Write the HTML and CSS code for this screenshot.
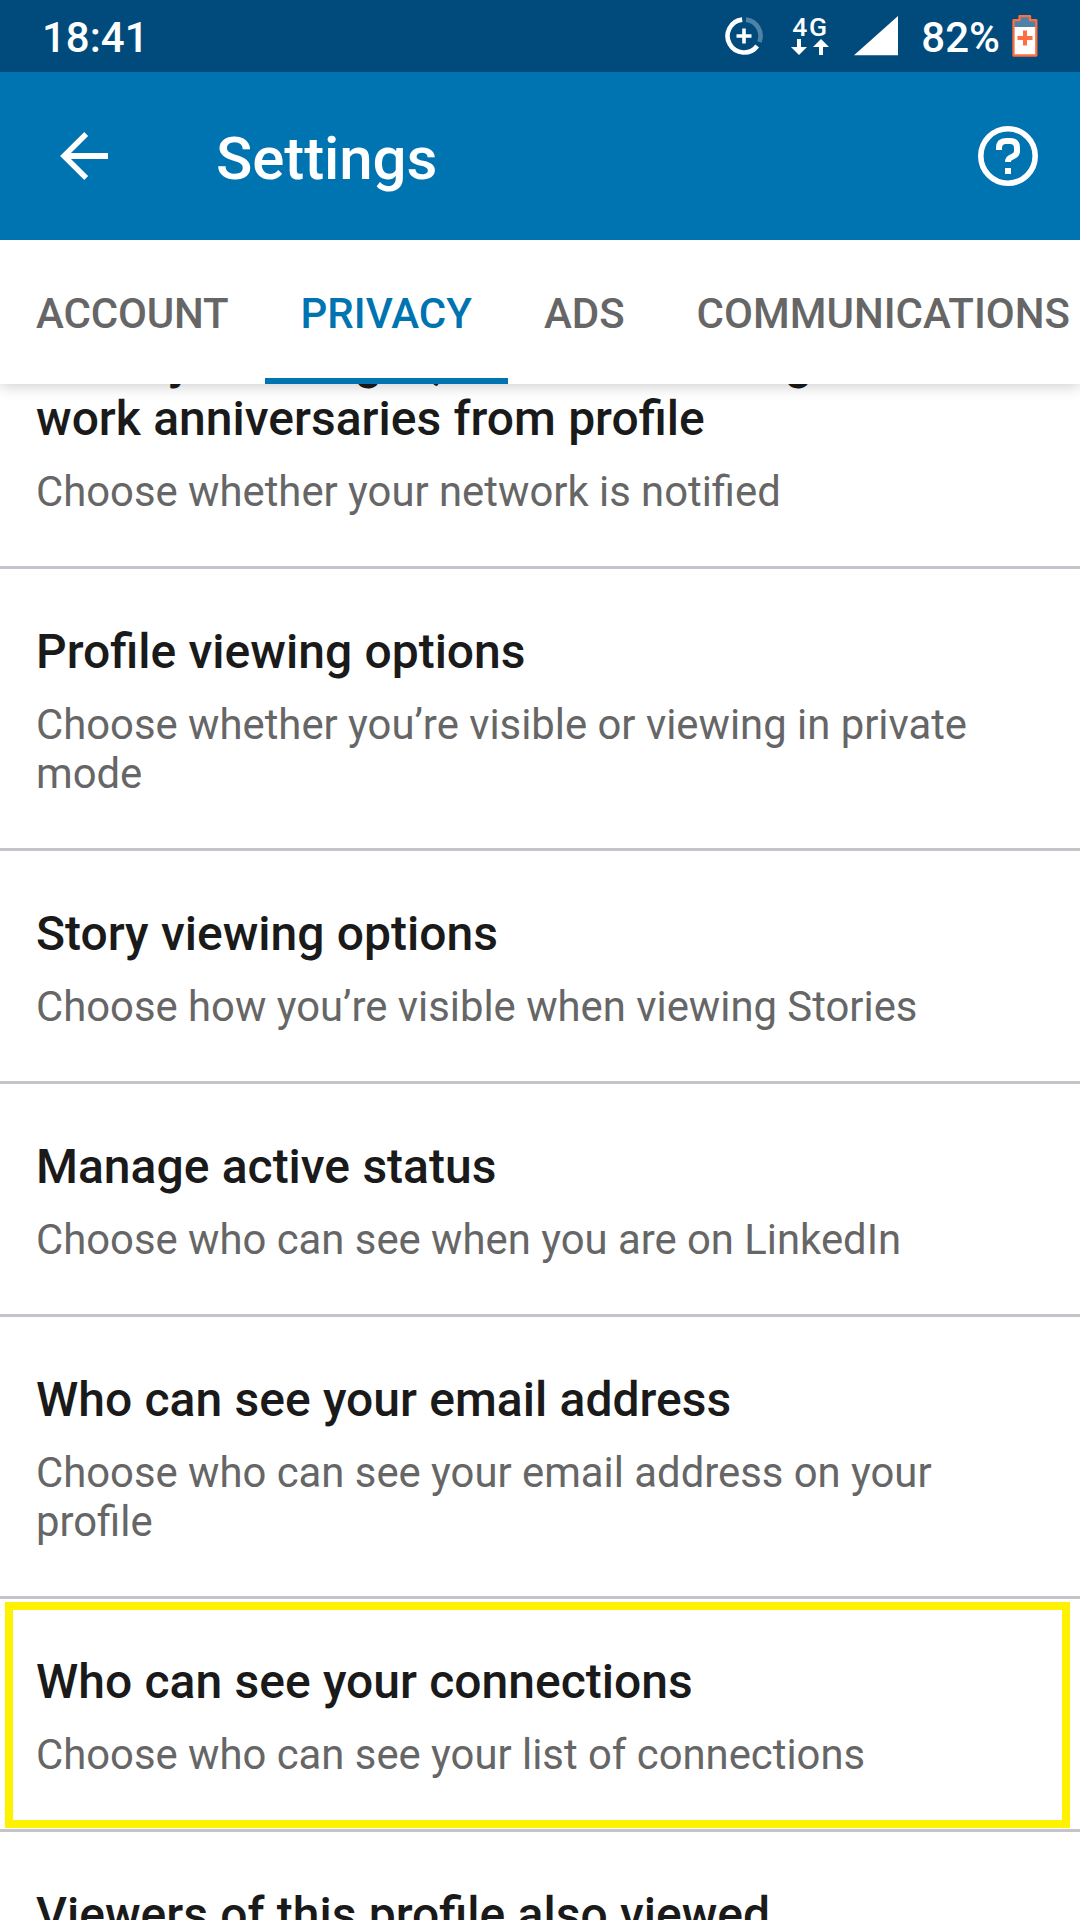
FILE: index.html
```html
<!DOCTYPE html>
<html lang="en">
<head>
<meta charset="utf-8">
<title>Settings</title>
<link rel="stylesheet" href="styles.css">
</head>
<body>
<div class="screen">
  <div class="status-bar">
    <span class="clock">18:41</span>
    <div class="status-icons">
      <svg class="data-saver" width="40" height="40" viewBox="0 0 40 40" fill="none">
        <path d="M18.200 3.600A16.500 16.500 0 1 0 33.200 30" stroke="#fff" stroke-width="4.600"/>
        <path d="M22 3.600A16.500 16.500 0 0 1 35.400 26" stroke="#4f83a6" stroke-width="4.600"/>
        <path d="M20 12.500v15M12.500 20h15" stroke="#fff" stroke-width="3.600"/>
      </svg>
      <div class="network">
        <span class="network-type">4G</span>
        <svg width="38" height="16" viewBox="0 0 38 16" fill="#fff">
          <path d="M6 0h4v8h6l-8 8-8-8h6zM28 16h4V8h6l-8-8-8 8h6z"/>
        </svg>
      </div>
      <svg class="signal" width="44" height="40" viewBox="0 0 44 40"><path d="M0 39.300 44 0v39.300z" fill="#fff"/></svg>
      <span class="battery-level">82%</span>
      <svg class="battery" width="26" height="42" viewBox="0 0 26 42">
        <path d="M7.500 1.200h10.500v4h6.500v35.500H1.500V5.200h6z" fill="#4f83a6"/>
        <path d="M1.500 12h23v28.500h-23z" fill="#fff"/>
        <path d="M7.500 1.200h10.500v4h6.300v35.300H1.500V5.200h6z" fill="none" stroke="#ff6e40" stroke-width="2.300" stroke-linejoin="round"/>
        <path d="M13 15.500v15M5.500 23h15" stroke="#ff6e40" stroke-width="4"/>
      </svg>
    </div>
  </div>
  <header class="app-bar">
    <svg class="back" width="48" height="48" viewBox="0 0 48 48" fill="none" stroke="#fff">
      <path d="M26.200 2 4 24l22.200 22" stroke-width="5.500"/>
      <path d="M6 24h42" stroke-width="6"/>
    </svg>
    <h1 class="app-title">Settings</h1>
    <svg class="help" width="60" height="60" viewBox="0 0 60 60" fill="none" stroke="#fff">
      <circle cx="30" cy="30" r="27.200" stroke-width="5.600"/>
      <path d="M21 24v-2q0-7 7-7h4q7 0 7 7v3q0 3-2.500 4.500L32 32q-2 1.200-2 4" stroke-width="6"/>
      <path d="M27 45h6" stroke-width="6"/>
    </svg>
  </header>
  <nav class="tabs">
    <span class="tab">ACCOUNT</span>
    <span class="tab active">PRIVACY</span>
    <span class="tab">ADS</span>
    <span class="tab">COMMUNICATIONS</span>
  </nav>
  <main class="viewport">
    <div class="list">
      <section class="item">
        <h2>Share job changes, education changes and work anniversaries from profile</h2>
        <p>Choose whether your network is notified</p>
      </section>
      <section class="item">
        <h2>Profile viewing options</h2>
        <p>Choose whether you’re visible or viewing in private mode</p>
      </section>
      <section class="item">
        <h2>Story viewing options</h2>
        <p>Choose how you’re visible when viewing Stories</p>
      </section>
      <section class="item">
        <h2>Manage active status</h2>
        <p>Choose who can see when you are on LinkedIn</p>
      </section>
      <section class="item">
        <h2>Who can see your email address</h2>
        <p>Choose who can see your email address on your profile</p>
      </section>
      <section class="item highlighted">
        <h2>Who can see your connections</h2>
        <p>Choose who can see your list of connections</p>
      </section>
      <section class="item">
        <h2>Viewers of this profile also viewed</h2>
      </section>
    </div>
  </main>
</div>
</body>
</html>
```
FILE: styles.css
```css
* { box-sizing: border-box; }
body {
  margin: 0;
  font-family: Roboto, "Noto Sans", sans-serif;
  background: #fff;
}
.screen {
  display: flex;
  flex-direction: column;
  width: 1080px;
  height: 1920px;
  overflow: hidden;
}
.status-bar {
  display: flex;
  justify-content: space-between;
  flex: none;
  height: 72px;
  padding: 0 42px;
  background: #004b7c;
  color: #fff;
  font-size: 42px;
  font-weight: 500;
  line-height: 76px;
}
.status-icons { display: flex; }
.data-saver { margin: 16px 27px 0 0; }
.network {
  display: flex;
  flex-direction: column;
  width: 38px;
  margin: 13px 25px 0 0;
}
.network-type {
  height: 26px;
  padding-left: 1px;
  font-size: 26.500px;
  font-weight: 500;
  line-height: 27px;
  letter-spacing: 1.500px;
  white-space: nowrap;
}
.signal { margin: 16px 23px 0 0; }
.battery { margin: 15px 0 0 12px; }
.app-bar {
  display: flex;
  align-items: center;
  flex: none;
  height: 168px;
  padding: 0 42px 0 60px;
  background: #0073b1;
  color: #fff;
}
.app-title {
  flex: 1;
  margin: 6px 0 0 108px;
  font-size: 60px;
  font-weight: 500;
  line-height: 70px;
  letter-spacing: -0.1px;
}
.tabs {
  display: flex;
  flex: none;
  position: relative;
  z-index: 1;
  height: 144px;
  background: #fff;
  box-shadow: 0 2px 14px rgba(0, 0, 0, 0.2);
  clip-path: inset(0 0 -24px);
}
.tab {
  flex: none;
  padding: 0 36px;
  color: #666;
  font-size: 42px;
  font-weight: 500;
  line-height: 147px;
}
.tab:first-child { letter-spacing: -0.15px; }
.tab.active {
  color: #0073b1;
  box-shadow: inset 0 -6px #0073b1;
}
.viewport {
  flex: 1;
  display: flex;
  overflow: hidden;
}
.list {
  width: 100%;
  margin-top: -105px;
}
.item {
  position: relative;
  padding: 54px 36px 50px;
  border-bottom: 3px solid #c4c4ca;
}
.item h2 {
  margin: 0 0 20px;
  color: #1a1a1a;
  font-size: 48px;
  font-weight: 500;
  line-height: 57px;
  word-spacing: 0.4px;
}
.item p {
  margin: 0;
  color: #666;
  font-size: 41.820px;
  line-height: 49px;
}
/* Frame drawn over the row without affecting its spacing */
.highlighted::after {
  content: "";
  position: absolute;
  top: 3px;
  right: 10px;
  bottom: 1px;
  left: 5px;
  border: 8px solid #fff200;
}
```
